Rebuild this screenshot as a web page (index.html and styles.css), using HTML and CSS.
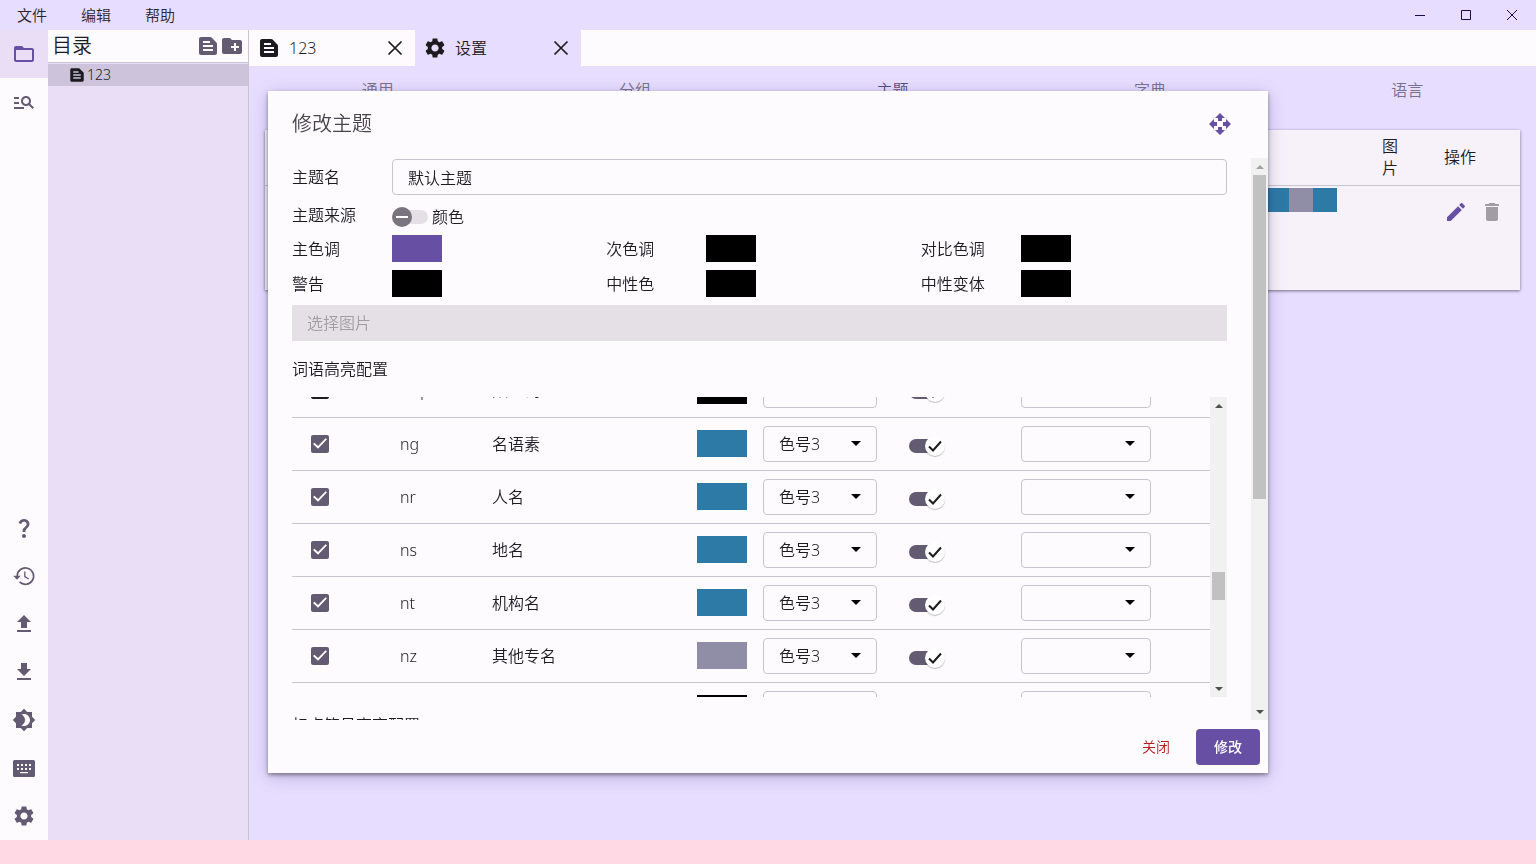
FILE: index.html
```html
<!DOCTYPE html>
<html lang="zh-CN">
<head>
<meta charset="utf-8">
<meta name="viewport" content="width=device-width, initial-scale=1">
<title>设置</title>
<link rel="stylesheet" href="styles.css">
</head>
<body>
<svg class="sprite" aria-hidden="true">
  <symbol id="folder" viewBox="0 0 24 24"><path d="M20 6h-8l-2-2H4c-1.1 0-1.99.9-1.99 2L2 18c0 1.1.9 2 2 2h16c1.1 0 2-.9 2-2V8c0-1.1-.9-2-2-2zm0 12H4V8h16v10z"/></symbol>
  <symbol id="find" viewBox="0 0 24 24"><path d="M7 9H2V7h5v2zm0 3H2v2h5v-2zm13.59 7l-3.83-3.83c-.8.52-1.74.83-2.76.83-2.76 0-5-2.24-5-5s2.24-5 5-5 5 2.24 5 5c0 1.02-.31 1.96-.83 2.75L22 17.59 20.59 19zM17 11c0-1.65-1.35-3-3-3s-3 1.35-3 3 1.35 3 3 3 3-1.35 3-3zM2 19h10v-2H2v2z"/></symbol>
  <symbol id="help" viewBox="0 0 24 24"><path d="M11.07 12.85c.77-1.39 2.25-2.21 3.11-3.44.91-1.29.4-3.7-2.18-3.7-1.69 0-2.52 1.28-2.87 2.34L6.54 6.96C7.25 4.83 9.18 3 11.99 3c2.35 0 3.96 1.07 4.78 2.41.7 1.15 1.11 3.3.03 4.9-1.2 1.77-2.35 2.31-2.97 3.45-.25.46-.35.76-.35 2.24h-2.89c-.01-.78-.13-2.05.48-3.15zM14 20c0 1.1-.9 2-2 2s-2-.9-2-2 .9-2 2-2 2 .9 2 2z"/></symbol>
  <symbol id="history" viewBox="0 0 24 24"><path d="M5.2 12A8.2 8.2 0 1 1 7.6 17.9" fill="none" stroke="currentColor" stroke-width="1.7"/><path d="M1.3 11.8h7.4L5 15.8z"/><path d="M12.8 7.6v5l4 2.4" fill="none" stroke="currentColor" stroke-width="1.3"/></symbol>
  <symbol id="upload" viewBox="0 0 24 24"><path d="M5 20h14v-2H5v2zm0-10h4v6h6v-6h4l-7-7-7 7z"/></symbol>
  <symbol id="download" viewBox="0 0 24 24"><path d="M5 20h14v-2H5v2zM19 9h-4V3H9v6H5l7 7 7-7z"/></symbol>
  <symbol id="brightness" viewBox="0 0 24 24"><path d="M20 8.69V4h-4.69L12 .69 8.69 4H4v4.69L.69 12 4 15.31V20h4.69L12 23.31 15.31 20H20v-4.69L23.31 12 20 8.69zM12 18c-.89 0-1.74-.2-2.5-.55C11.56 16.5 13 14.42 13 12s-1.44-4.5-3.5-5.45C10.26 6.2 11.11 6 12 6c3.31 0 6 2.69 6 6s-2.69 6-6 6z"/></symbol>
  <symbol id="keyboard" viewBox="0 0 24 24"><path fill-rule="evenodd" d="M2.5 4h19A1.5 1.5 0 0 1 23 5.500v14A1.500 1.500 0 0 1 21.500 21h-19A1.500 1.500 0 0 1 1 19.500v-14A1.500 1.500 0 0 1 2.500 4zM5 8v2h2V8zm4 0v2h2V8zm4 0v2h2V8zm4 0v2h2V8zM5 12v2h2v-2zm4 0v2h2v-2zm4 0v2h2v-2zm4 0v2h2v-2zM8 16v1.300h8V16z"/></symbol>
  <symbol id="gear" viewBox="0 0 24 24"><path d="M19.14 12.94c.04-.3.06-.61.06-.94 0-.32-.02-.64-.07-.94l2.03-1.58c.18-.14.23-.41.12-.61l-1.92-3.32c-.12-.22-.37-.29-.59-.22l-2.39.96c-.5-.38-1.03-.7-1.62-.94l-.36-2.54c-.04-.24-.24-.41-.48-.41h-3.84c-.24 0-.43.17-.47.41l-.36 2.54c-.59.24-1.13.57-1.62.94l-2.39-.96c-.22-.08-.47 0-.59.22L2.74 8.87c-.12.21-.08.47.12.61l2.03 1.58c-.05.3-.09.63-.09.94s.02.64.07.94l-2.03 1.58c-.18.14-.23.41-.12.61l1.92 3.32c.12.22.37.29.59.22l2.39-.96c.5.38 1.03.7 1.62.94l.36 2.54c.05.24.24.41.48.41h3.84c.24 0 .44-.17.47-.41l.36-2.54c.59-.24 1.13-.56 1.62-.94l2.39.96c.22.08.47 0 .59-.22l1.92-3.32c.12-.22.07-.47-.12-.61l-2.01-1.58zM12 15.6c-1.98 0-3.6-1.62-3.6-3.6s1.62-3.6 3.6-3.6 3.6 1.62 3.6 3.6-1.62 3.6-3.6 3.6z"/></symbol>
  <symbol id="doc" viewBox="0 0 24 24"><path d="M20.41 8.41l-4.83-4.83c-.37-.37-.88-.58-1.41-.58H5c-1.1 0-2 .9-2 2v14c0 1.1.9 2 2 2h14c1.1 0 2-.9 2-2V9.830c0-.53-.21-1.040-.59-1.420zM7 7h7v2H7V7zm10 10H7v-2h10v2zm0-4H7v-2h10v2z"/></symbol>
  <symbol id="newfolder" viewBox="0 0 24 24"><path d="M20 6h-8l-2-2H4c-1.11 0-1.99.89-1.99 2L2 18c0 1.11.89 2 2 2h16c1.11 0 2-.89 2-2V8c0-1.11-.89-2-2-2zm-1 8h-3v3h-2v-3h-3v-2h3V9h2v3h3v2z"/></symbol>
  <symbol id="close" viewBox="0 0 24 24"><path d="M5.500 5.500l13 13m0-13l-13 13" fill="none" stroke="currentColor" stroke-width="1.700"/></symbol>
  <symbol id="edit" viewBox="0 0 24 24"><path d="M3 17.25V21h3.75L17.81 9.94l-3.75-3.75L3 17.25zM20.71 7.04c.39-.39.39-1.02 0-1.41l-2.34-2.34c-.39-.39-1.02-.39-1.41 0l-1.83 1.83 3.75 3.75 1.83-1.83z"/></symbol>
  <symbol id="trash" viewBox="0 0 24 24"><path d="M6 19c0 1.1.9 2 2 2h8c1.1 0 2-.9 2-2V7H6v12zM19 4h-3.500l-1-1h-5l-1 1H5v2h14V4z"/></symbol>
  <symbol id="move" viewBox="0 0 24 24"><path d="M10 9h4V6h3l-5-5-5 5h3v3zm-1 1H6V7l-5 5 5 5v-3h3v-4zm14 2l-5-5v3h-3v4h3v3l5-5zm-9 3h-4v3H7l5 5 5-5h-3v-3z"/></symbol>
  <symbol id="caret" viewBox="0 0 10 5"><path d="M0 0h10L5 5z"/></symbol>
</svg>

<div class="app">
  <header class="titlebar">
    <nav class="menu">
      <button type="button">文件</button>
      <button type="button">编辑</button>
      <button type="button">帮助</button>
    </nav>
    <div class="winctl">
      <button type="button" aria-label="最小化"><svg viewBox="0 0 12 12"><path d="M1 6.500h10"/></svg></button>
      <button type="button" aria-label="最大化"><svg viewBox="0 0 12 12"><path d="M1.500 1.500h9v9h-9z"/></svg></button>
      <button type="button" aria-label="关闭窗口"><svg viewBox="0 0 12 12"><path d="M1 1l10 10M11 1L1 11"/></svg></button>
    </div>
  </header>

  <div class="workspace">
    <nav class="rail">
      <button type="button" class="current" aria-label="目录"><svg class="icon"><use href="#folder"/></svg></button>
      <button type="button" aria-label="搜索"><svg class="icon"><use href="#find"/></svg></button>
      <span class="grow"></span>
      <button type="button" aria-label="问号"><svg class="icon"><use href="#help"/></svg></button>
      <button type="button" aria-label="历史"><svg class="icon"><use href="#history"/></svg></button>
      <button type="button" aria-label="上传"><svg class="icon"><use href="#upload"/></svg></button>
      <button type="button" aria-label="下载"><svg class="icon"><use href="#download"/></svg></button>
      <button type="button" aria-label="明暗"><svg class="icon"><use href="#brightness"/></svg></button>
      <button type="button" aria-label="键盘"><svg class="icon"><use href="#keyboard"/></svg></button>
      <button type="button" aria-label="设置"><svg class="icon"><use href="#gear"/></svg></button>
    </nav>

    <aside class="tree">
      <div class="tree-head">
        <h2>目录</h2>
        <button type="button" aria-label="新建文件"><svg class="icon"><use href="#doc"/></svg></button>
        <button type="button" aria-label="新建文件夹"><svg class="icon"><use href="#newfolder"/></svg></button>
      </div>
      <button type="button" class="tree-item"><svg class="icon small"><use href="#doc"/></svg><span>123</span></button>
    </aside>

    <main class="content">
      <div class="doc-tabs">
        <div class="doc-tab">
          <svg class="icon"><use href="#doc"/></svg><span>123</span>
          <button type="button" aria-label="关闭 123"><svg class="icon"><use href="#close"/></svg></button>
        </div>
        <div class="doc-tab active">
          <svg class="icon"><use href="#gear"/></svg><span>设置</span>
          <button type="button" aria-label="关闭 设置"><svg class="icon"><use href="#close"/></svg></button>
        </div>
      </div>
      <div class="sections">
        <button type="button">通用</button>
        <button type="button">分组</button>
        <button type="button" class="on">主题</button>
        <button type="button">字典</button>
        <button type="button">语言</button>
      </div>
      <div class="card">
        <table class="themes">
          <thead><tr><th class="colors"></th><th class="image">图片</th><th class="actions">操作</th></tr></thead>
          <tbody><tr>
            <td class="colors"><div class="strip"><i class="blue"></i><i class="grey"></i><i class="blue"></i></div></td>
            <td></td>
            <td class="ops"><div class="op-buttons">
              <button type="button" aria-label="编辑"><svg class="icon"><use href="#edit"/></svg></button>
              <button type="button" aria-label="删除" disabled><svg class="icon"><use href="#trash"/></svg></button>
            </div></td>
          </tr></tbody>
        </table>
      </div>
    </main>
  </div>
  <footer class="statusbar"></footer>
</div>

<div class="overlay">
  <section class="dialog" role="dialog" aria-labelledby="dialog-title">
    <header class="dialog-head">
      <h1 id="dialog-title">修改主题</h1>
      <button type="button" aria-label="移动"><svg class="icon"><use href="#move"/></svg></button>
    </header>
    <div class="dialog-body">
      <div class="form">
        <div class="field"><label for="name">主题名</label><input id="name" class="text" type="text" value="默认主题"></div>
        <div class="field source"><span>主题来源</span><label class="source-switch"><input class="switch" type="checkbox">颜色</label></div>
        <div class="palette">
          <div class="field"><span>主色调</span><button type="button" class="swatch primary" aria-label="主色调"></button></div>
          <div class="field"><span>次色调</span><button type="button" class="swatch" aria-label="次色调"></button></div>
          <div class="field"><span>对比色调</span><button type="button" class="swatch" aria-label="对比色调"></button></div>
          <div class="field"><span>警告</span><button type="button" class="swatch" aria-label="警告"></button></div>
          <div class="field"><span>中性色</span><button type="button" class="swatch" aria-label="中性色"></button></div>
          <div class="field"><span>中性变体</span><button type="button" class="swatch" aria-label="中性变体"></button></div>
        </div>
        <button type="button" class="pick-image" disabled>选择图片</button>
        <h3>词语高亮配置</h3>
        <div class="word-list">
          <div class="viewport" id="words">
            <table class="words">
              <colgroup><col class="c-check"><col class="c-code"><col><col class="c-color"><col class="c-switch"><col></colgroup>
              <tbody id="rows"></tbody>
            </table>
          </div>
          <div class="scrollbar list-bar" aria-hidden="true">
            <span class="arrow up"><svg><use href="#caret"/></svg></span>
            <span class="before"></span><span class="thumb"></span><span class="after"></span>
            <span class="arrow"><svg><use href="#caret"/></svg></span>
          </div>
        </div>
        <h3>标点符号高亮配置</h3>
      </div>
      <div class="scrollbar form-bar" aria-hidden="true">
        <span class="arrow up off"><svg><use href="#caret"/></svg></span>
        <span class="thumb"></span><span class="after"></span>
        <span class="arrow"><svg><use href="#caret"/></svg></span>
      </div>
    </div>
    <footer class="dialog-foot">
      <button type="button" class="btn">关闭</button>
      <button type="button" class="btn filled">修改</button>
    </footer>
  </section>
</div>
<script src="app.js"></script>
</body>
</html>
```
FILE: styles.css
```css
* { box-sizing: border-box; }

:root {
  --surface: #fefbff;
  --lavender: #e7deff;
  --primary: #6750a4;
  --secondary: #625b71;
  --ink: #1c1b1f;
  --line: #c9c5d0;
}

body {
  margin: 0;
  overflow: hidden;
  color: var(--ink);
  font: 350 16px/24px "Noto Sans", "Noto Sans CJK SC", sans-serif;
}

h1, h2, h3 { margin: 0; font-weight: inherit; }

button {
  padding: 0;
  border: 0;
  background: none;
  color: inherit;
  font: inherit;
}

.sprite { display: none; }
.icon { display: block; width: 24px; height: 24px; fill: currentColor; }
.icon.small { width: 18px; height: 18px; }
.grow { flex: 1; }

.app {
  display: flex;
  flex-direction: column;
  height: 100vh;
  background: var(--lavender);
}

/* Title bar */
.titlebar { display: flex; justify-content: space-between; height: 30px; padding: 0 1px 1px 0; color: #1d0a4a; }
.menu, .winctl { display: flex; }
.menu button { width: 64px; font-size: 15px; color: #2a2533; }
.winctl button { display: grid; place-items: center; width: 46px; }
.winctl svg { width: 12px; height: 12px; fill: none; stroke: currentColor; }

.workspace { display: flex; flex: 1; min-height: 0; }
.statusbar { height: 24px; background: #ffd9e3; }

/* Icon rail */
.rail { display: flex; flex-direction: column; width: 48px; background: var(--surface); color: var(--secondary); }
.rail button { display: grid; place-items: center; height: 48px; }
.rail .current { background: #e9def6; color: var(--primary); }

/* Directory tree */
.tree { width: 201px; border-right: 1px solid var(--line); background: #e9def6; }
.tree-head {
  display: flex;
  align-items: center;
  height: 33px;
  padding: 0 4px;
  border-bottom: 1px solid var(--line);
  background: var(--surface);
  color: var(--secondary);
}
.tree-head h2 { flex: 1; color: var(--ink); font-size: 20px; }
.tree-item {
  display: flex;
  align-items: center;
  gap: 1px;
  width: 100%;
  height: 22px;
  margin-top: 1px;
  padding: 0 20px;
  background: #cdc4db;
  font-size: 14px;
}

/* Document tabs */
.content { flex: 1; min-width: 0; }
.doc-tabs { display: flex; height: 36px; background: var(--surface); }
.doc-tab { display: flex; align-items: center; width: 166px; padding: 0 8px; }
.doc-tab span { flex: 1; padding-left: 8px; }
.doc-tab.active { background: var(--lavender); }

.sections { display: grid; grid-template-columns: repeat(5, 1fr); height: 48px; color: #79718c; }
.sections .on { color: #5b4b80; }

/* Theme table */
.card {
  margin: 16px;
  background: #f7f2fa;
  box-shadow: 0 1px 3px rgba(0, 0, 0, .5);
}
.themes { width: 100%; border-collapse: collapse; table-layout: fixed; line-height: 22px; }
.themes th { height: 55px; padding: 0 16px; border-bottom: 1px solid var(--line); font-weight: inherit; text-align: left; }
.themes .image { width: 62px; padding-right: 24px; }
.themes .actions { width: 92px; }
.themes td { height: 105px; padding: 2px 0 0; vertical-align: top; }
.themes td.colors { padding-right: 29px; }
.strip { display: flex; justify-content: flex-end; }
.strip i { width: 24px; height: 24px; }
.op-buttons { display: flex; justify-content: center; padding-top: 6px; color: var(--primary); }
.op-buttons button { display: grid; place-items: center; width: 36px; height: 36px; }
.op-buttons button:disabled { color: #a19da4; }

.blue { background: #2e7aa7; }
.grey { background: #908ea6; }

/* Dialog */
.overlay { position: fixed; inset: 0; display: grid; place-items: center; }
.dialog {
  display: flex;
  flex-direction: column;
  width: 1000px;
  max-width: 90vw;
  max-height: calc(100vh - 182px);
  background: var(--surface);
  box-shadow: 0 2px 4px rgba(0, 0, 0, .4), 0 4px 16px rgba(60, 30, 110, .25);
}
.dialog-head { display: flex; flex: none; justify-content: space-between; align-items: center; height: 66px; padding: 0 36px 0 24px; color: #49454f; }
.dialog-head h1 { font-size: 20px; line-height: 32px; }
.dialog-head button { color: var(--primary); }
.dialog-body { display: flex; flex: 0 1 auto; min-height: 0; padding-top: 1px; }
.form { flex: 1; min-width: 0; padding: 1px 24px 0; overflow: hidden; }
.dialog-foot { display: flex; flex: none; justify-content: flex-end; gap: 8px; padding: 9px 8px 8px; }
.btn { width: 64px; height: 36px; border-radius: 4px; color: #ba1a1a; font-size: 14px; }
.btn.filled { background: var(--primary); color: #fff; font-weight: 500; }

.field { display: grid; grid-template-columns: 100px 1fr; align-items: center; }
.text {
  width: 100%;
  height: 36px;
  padding: 0 15px;
  border: 1px solid var(--line);
  border-radius: 4px;
  background: transparent;
  color: inherit;
  font: inherit;
}
.source { height: 40px; }
.source-switch { display: flex; align-items: center; gap: 4px; padding-top: 4px; }
.palette { display: grid; grid-template-columns: repeat(3, 1fr); gap: 8px; }
.swatch { flex: none; width: 50px; height: 27px; background: #000; }
.swatch.primary { background: var(--primary); }
.swatch.blue { background: #2e7aa7; }
.swatch.grey { background: #908ea6; }
.pick-image {
  display: block;
  width: 100%;
  height: 36px;
  margin-top: 8px;
  padding: 0 15px;
  background: #e5e0e6;
  color: #a19da4;
  text-align: left;
}
.form h3 { padding: 16px 0; font-size: 16px; }

/* Switch */
.switch {
  display: grid;
  flex: none;
  align-items: center;
  width: 36px;
  height: 20px;
  margin: 0;
  appearance: none;
}
.switch::before, .switch::after { content: ""; grid-area: 1 / 1; }
.switch::before { width: 32px; height: 14px; margin-left: 4px; border-radius: 7px; background: #e5e0e6; }
.switch::after {
  width: 20px;
  height: 20px;
  border-radius: 50%;
  background: linear-gradient(#fff, #fff) center / 12px 2px no-repeat #79747e;
}
.switch:checked::before { margin-left: 0; background: var(--secondary); }
.switch:checked::after {
  justify-self: end;
  background: #fff;
  box-shadow: 0 1px 1px rgba(0, 0, 0, .25);
}
.switch-box { display: grid; width: 36px; margin-top: 4px; }
.switch-box > * { grid-area: 1 / 1; }
.switch-box svg {
  z-index: 1;
  align-self: center;
  justify-self: end;
  width: 20px;
  height: 20px;
  fill: none;
  stroke: var(--ink);
  stroke-width: 2;
  pointer-events: none;
}

/* Word list */
.word-list { display: flex; height: 300px; }
.viewport { flex: 1; min-width: 0; overflow: hidden; }
.words { width: 100%; border-collapse: collapse; table-layout: fixed; }
.words td { height: 53px; padding: 0 16px; border-bottom: 1px solid var(--line); }
.c-check, .c-code { width: 92px; }
.c-color { width: 212px; }
.c-switch { width: 112px; }
.color-cell { display: flex; align-items: center; gap: 16px; }

.check { display: grid; place-items: center; width: 18px; height: 18px; margin: 0 3px; border: 2px solid var(--ink); border-radius: 2px; appearance: none; }
.check:checked { border-color: var(--secondary); background: var(--secondary); }
.check:checked::after {
  content: "";
  width: 14px;
  height: 11px;
  background: #fff;
  clip-path: polygon(0 55%, 10% 43%, 36% 72%, 90% 2%, 100% 12%, 36% 98%);
}

.select { display: grid; align-items: center; width: 130px; }
.select.narrow { width: 114px; }
.select > * { grid-area: 1 / 1; }
.select select {
  width: 100%;
  height: 36px;
  padding: 0 15px;
  border: 1px solid var(--line);
  border-radius: 4px;
  appearance: none;
  background: transparent;
  color: inherit;
  font: inherit;
}
.select svg { justify-self: end; width: 10px; height: 5px; margin-right: 16px; pointer-events: none; }

/* Scroll bars */
.scrollbar { display: flex; flex-direction: column; width: 17px; padding: 0 2px; background: #f1f1f1; }
.scrollbar .thumb { background: #c1c1c1; }
.arrow { display: grid; place-items: center; height: 17px; }
.arrow svg { width: 8px; height: 4px; fill: #505050; }
.arrow.up svg { transform: rotate(180deg); }
.arrow.off svg { fill: #a3a3a3; }
.list-bar .before { flex: 158; }
.list-bar .thumb { flex: 28; }
.list-bar .after { flex: 80; }
.form-bar .thumb { flex: 324; }
.form-bar .after { flex: 204; }
```
FILE: app.js
```js
const words = [
  { code: 'mq', name: '数量词', color: '', level: '', on: false },
  { code: 'ng', name: '名语素', color: 'blue', level: '色号3', on: true },
  { code: 'nr', name: '人名', color: 'blue', level: '色号3', on: true },
  { code: 'ns', name: '地名', color: 'blue', level: '色号3', on: true },
  { code: 'nt', name: '机构名', color: 'blue', level: '色号3', on: true },
  { code: 'nz', name: '其他专名', color: 'grey', level: '色号3', on: true },
  { code: '', name: '', color: '', level: '', on: false }
];

const caret = '<svg><use href="#caret"/></svg>';

document.getElementById('rows').innerHTML = words.map(w => `
  <tr>
    <td><input class="check" type="checkbox" aria-label="启用 ${w.code}" ${w.on ? 'checked' : ''}></td>
    <td>${w.code}</td>
    <td>${w.name}</td>
    <td><div class="color-cell">
      <button type="button" class="swatch ${w.color}" aria-label="颜色 ${w.code}"></button>
      <span class="select narrow"><select aria-label="色号 ${w.code}"><option>${w.level}</option></select>${caret}</span>
    </div></td>
    <td><label class="switch-box"><input class="switch" type="checkbox" aria-label="开关 ${w.code}" checked><svg viewBox="0 0 20 20"><path d="M4 10.500l4 4 8-9"/></svg></label></td>
    <td><span class="select"><select aria-label="样式 ${w.code}"><option></option></select>${caret}</span></td>
  </tr>`).join('');

document.getElementById('words').scrollTop = 33;
```
